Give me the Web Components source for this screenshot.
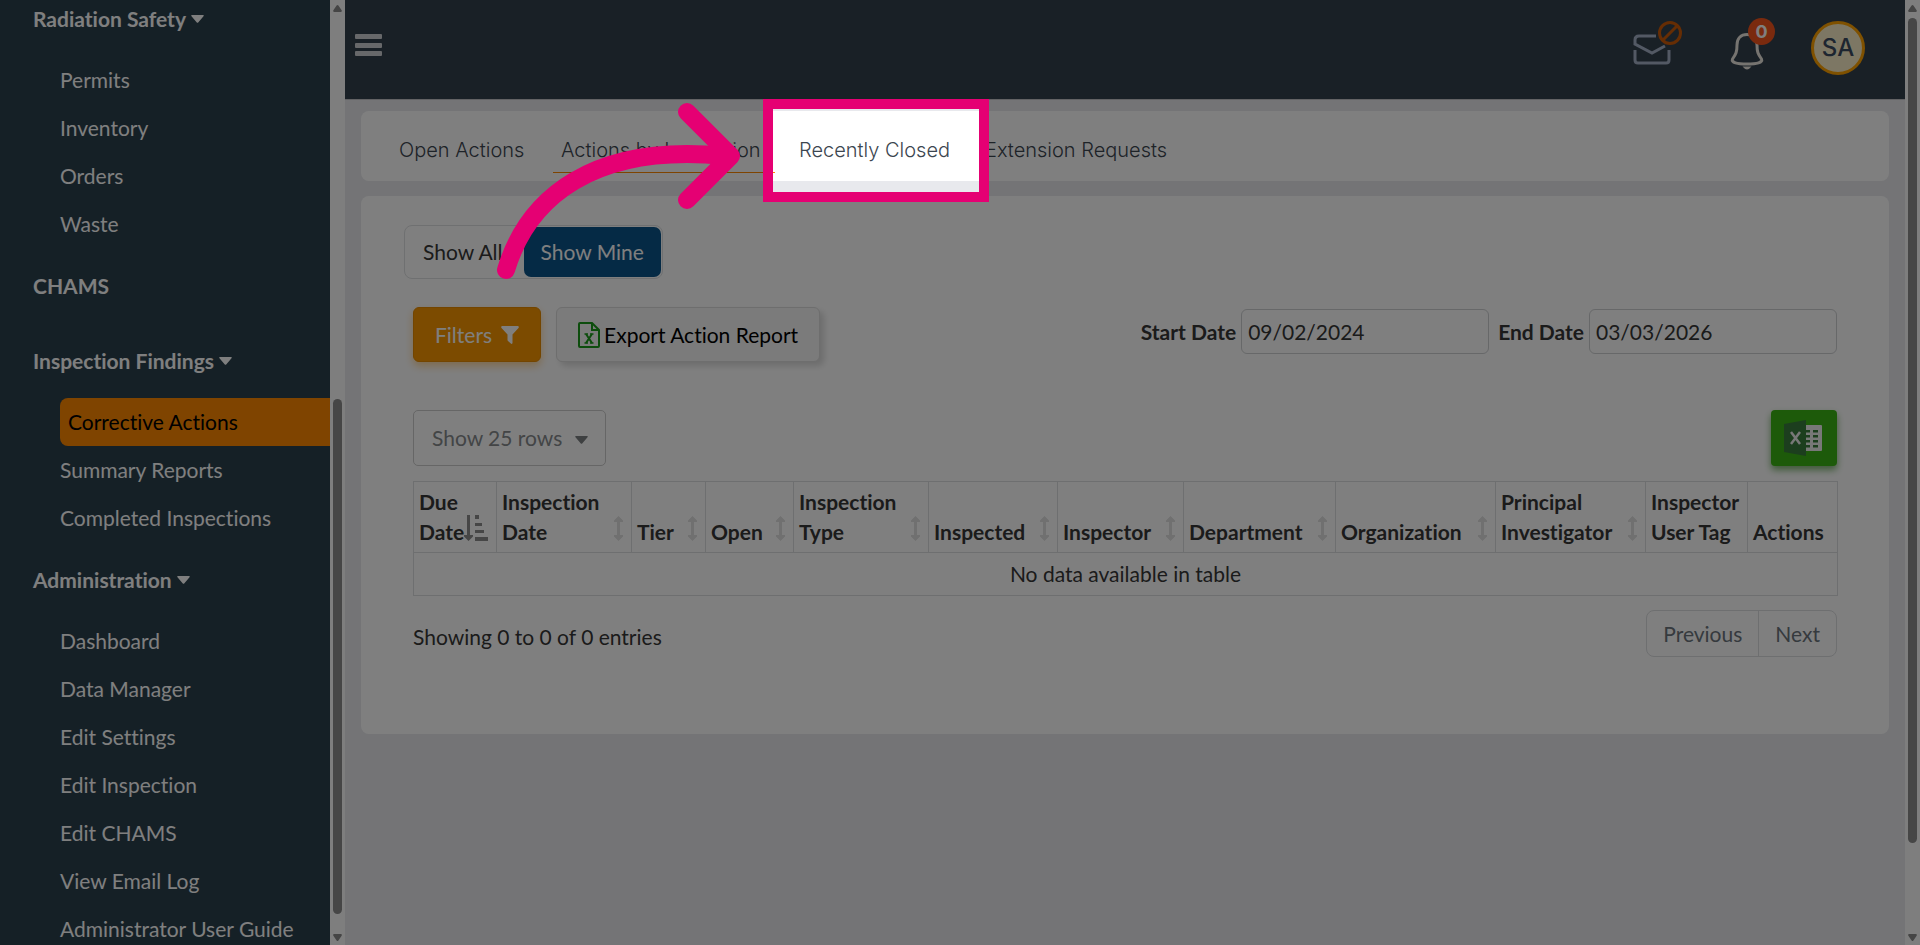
<!DOCTYPE html>
<html lang="en">
<head>
<meta charset="utf-8">
<title>Corrective Actions</title>
<style>
  body {
    margin: 0;
    height: 100vh;
    overflow: hidden;
    font-family: Lato, "Open Sans", sans-serif;
    font-size: 21px;
    line-height: 30px;
    font-variant-ligatures: none;
    color: #363636;
  }
</style>
</head>
<body>
<app-shell>
  <side-nav slot="nav">
    <nav-group label="Radiation Safety" open>
      <nav-item>Permits</nav-item>
      <nav-item>Inventory</nav-item>
      <nav-item>Orders</nav-item>
      <nav-item>Waste</nav-item>
    </nav-group>
    <nav-group label="CHAMS"></nav-group>
    <nav-group label="Inspection Findings" open>
      <nav-item active>Corrective Actions</nav-item>
      <nav-item>Summary Reports</nav-item>
      <nav-item>Completed Inspections</nav-item>
    </nav-group>
    <nav-group label="Administration" open>
      <nav-item>Dashboard</nav-item>
      <nav-item>Data Manager</nav-item>
      <nav-item>Edit Settings</nav-item>
      <nav-item>Edit Inspection</nav-item>
      <nav-item>Edit CHAMS</nav-item>
      <nav-item>View Email Log</nav-item>
      <nav-item>Administrator User Guide</nav-item>
    </nav-group>
  </side-nav>
  <top-bar slot="header" initials="SA" count="0"></top-bar>
  <tab-bar>
    <tab-link>Open Actions</tab-link>
    <tab-link active>Actions by Inspection</tab-link>
    <tab-link>Recently Closed<tour-spotlight slot="over"></tour-spotlight></tab-link>
    <tab-link>Extension Requests</tab-link>
  </tab-bar>
  <actions-panel></actions-panel>
</app-shell>

<script>
// every element gets an open shadow root filled from its template
function makeTemplate(html) {
  const template = document.createElement("template");
  template.innerHTML = html;
  return template;
}

class BaseElement extends HTMLElement {
  constructor() {
    super();
    this.attachShadow({ mode: "open" });
    this.shadowRoot.appendChild(this.constructor.template.content.cloneNode(true));
  }
}

// ---------- layout ----------
class AppShell extends BaseElement {
  static template = makeTemplate(`
    <style>
      :host { display: flex; height: 100vh; background: #e8e9ed; }
      .content { flex: 1; min-width: 0; display: flex; flex-direction: column; }
      main { padding: 11px 16px; display: flex; flex-direction: column; gap: 15px; }
    </style>
    <slot name="nav"></slot>
    <div class="content">
      <slot name="header"></slot>
      <main><slot></slot></main>
    </div>
    <scroll-rail style="--before: 0fr; --thumb: 825fr; --after: 84fr"></scroll-rail>
  `);
}
customElements.define("app-shell", AppShell);

class ScrollRail extends BaseElement {
  static template = makeTemplate(`
    <style>
      :host {
        box-sizing: border-box;
        flex: none;
        width: 15px;
        height: 100%;
        display: grid;
        grid-template-rows: 18px var(--before) var(--thumb) var(--after) 18px;
        justify-items: center;
        background: #fcfcfc;
      }
      svg { width: 9px; height: 7px; fill: #8a8a8a; margin-top: 5px; }
      .thumb { grid-row: 3; width: 9px; border-radius: 5px; background: #8c8c8c; }
      .down { grid-row: 5; margin-top: 7px; }
    </style>
    <svg viewBox="0 0 9 7"><path d="M4.5 0 Q5 0 5.4 .6 L8.8 5.6 Q9 7 8 7 H1 Q0 7 .2 5.6 L3.6 .6 Q4 0 4.5 0Z"/></svg>
    <div class="thumb"></div>
    <svg class="down" viewBox="0 0 9 7"><path d="M4.5 7 Q5 7 5.4 6.4 L8.8 1.4 Q9 0 8 0 H1 Q0 0 .2 1.4 L3.6 6.4 Q4 7 4.5 7Z"/></svg>
  `);
}
customElements.define("scroll-rail", ScrollRail);

// ---------- sidebar ----------
class SideNav extends BaseElement {
  static template = makeTemplate(`
    <style>
      :host { display: flex; flex: none; width: 345px; height: 100vh; overflow: hidden; background: #2a404c; }
      nav { flex: 1; margin-top: -19px; }
    </style>
    <nav><slot></slot></nav>
    <scroll-rail style="--before: 381fr; --thumb: 515fr; --after: 13fr"></scroll-rail>
  `);
}
customElements.define("side-nav", SideNav);

class NavGroup extends BaseElement {
  static template = makeTemplate(`
    <style>
      :host { display: block; }
      button {
        display: flex;
        align-items: center;
        gap: 5px;
        width: 100%;
        height: 75px;
        padding: 0 0 0 33px;
        border: 0;
        background: none;
        font: inherit;
        font-weight: 700;
        color: #fff;
      }
      svg { width: 13px; height: 8px; fill: #fff; display: none; }
      :host([open]) svg { display: block; }
      .items { padding-left: 60px; }
    </style>
    <button type="button"><span></span><svg viewBox="0 0 13 8"><path d="M1 0H12Q13.4 .3 12.5 1.3L7.2 7.4Q6.5 8 5.8 7.4L.5 1.3Q-.4 .3 1 0Z"/></svg></button>
    <div class="items"><slot></slot></div>
  `);
  connectedCallback() {
    this.shadowRoot.querySelector("span").textContent = this.getAttribute("label");
  }
}
customElements.define("nav-group", NavGroup);

class NavItem extends BaseElement {
  static template = makeTemplate(`
    <style>
      :host { display: block; }
      a { display: block; line-height: 48px; color: #fff; text-decoration: none; white-space: nowrap; }
      :host([active]) a { padding-left: 8px; border-radius: 8px 0 0 8px; background: #ff8800; color: #000; }
    </style>
    <a href="#"><slot></slot></a>
  `);
}
customElements.define("nav-item", NavItem);

// ---------- header ----------
class TopBar extends BaseElement {
  static template = makeTemplate(`
    <style>
      :host {
        box-sizing: border-box;
        display: flex;
        align-items: center;
        justify-content: space-between;
        height: 100px;
        padding: 0 40px 3px 10px;
        background: #33404d;
        border-bottom: 1px solid #c4c5c9;
      }
      button { padding: 0; border: 0; background: none; display: block; }
      svg { display: block; }
      .menu { margin-bottom: 6px; }
      .tools { display: flex; align-items: center; }
      .mail { margin-right: 47px; }
      .bell { position: relative; margin-right: 47px; }
      .badge {
        position: absolute;
        right: -11px;
        top: -3px;
        width: 27px;
        height: 27px;
        border-radius: 50%;
        background: #f4541c;
        color: #fff;
        font: 700 18px/27px Inter, sans-serif;
        text-align: center;
      }
      .avatar {
        box-sizing: border-box;
        width: 54px;
        height: 54px;
        border: 3px solid #ffa200;
        border-radius: 50%;
        background: #faeec8;
        color: #3a4a60;
        font: 500 24px/48px Inter, sans-serif;
      }
    </style>
    <button class="menu" type="button" aria-label="Menu">
      <svg width="27" height="22" viewBox="0 0 27 22" fill="#ced0d5">
        <rect width="27" height="5" rx="1"/><rect y="9" width="27" height="5" rx="1"/><rect y="17" width="27" height="5" rx="1"/>
      </svg>
    </button>
    <div class="tools">
      <button class="mail" type="button" aria-label="Mail">
        <svg width="50" height="54" viewBox="0 0 50 54" fill="none">
          <g stroke="#a6b2c8" stroke-width="3">
            <path d="M23 15H6Q2 15 2 19V23L19 32L32 25"/>
            <path d="M2 29V39Q2 42 5 42H33Q36 42 36 39V29"/>
          </g>
          <g stroke="#cc5a08" stroke-width="3"><circle cx="37" cy="12" r="10.5"/><path d="M30 19L44 5"/></g>
        </svg>
      </button>
      <button class="bell" type="button" aria-label="Notifications">
        <svg width="34" height="54" viewBox="0 0 34 54" fill="none">
          <path d="M17 13.5C11 13.5 7 17.5 7 24C7 31 6 33 2.5 38C1 41.500 7 43 17 43C27 43 33 41.500 31.5 38C28 33 27 31 27 24C27 17.500 23 13.500 17 13.5Z" stroke="#ece8e0" stroke-width="3"/>
          <path d="M12.5 45.5H21.5Q19 48.500 17 48.5Q15 48.500 12.5 45.5Z" fill="#ece8e0"/>
        </svg>
        <span class="badge"></span>
      </button>
      <button class="avatar" type="button"></button>
    </div>
  `);
  connectedCallback() {
    this.shadowRoot.querySelector(".badge").textContent = this.getAttribute("count");
    this.shadowRoot.querySelector(".avatar").textContent = this.getAttribute("initials");
  }
}
customElements.define("top-bar", TopBar);

// ---------- tabs ----------
class TabBar extends BaseElement {
  static template = makeTemplate(`
    <style>
      :host { display: block; border-radius: 8px; background: #fff; }
      nav {
        display: grid;
        grid-template-columns: 146px 222px 170px max-content;
        gap: 16px;
        padding: 17px 30px 8px;
      }
    </style>
    <nav><slot></slot></nav>
  `);
}
customElements.define("tab-bar", TabBar);

class TabLink extends BaseElement {
  static template = makeTemplate(`
    <style>
      :host { display: block; position: relative; font: 300 20px/44px Inter, sans-serif; }
      a {
        display: block;
        padding: 0 8px;
        border-bottom: 1px solid transparent;
        color: #3c4650;
        text-decoration: none;
        white-space: nowrap;
      }
      :host([active]) a { border-color: #ff8800; }
    </style>
    <a href="#"><slot></slot></a>
    <slot name="over"></slot>
  `);
}
customElements.define("tab-link", TabLink);

// dims everything but the box it sits on, with an arrow leading to it
class TourSpotlight extends BaseElement {
  static template = makeTemplate(`
    <style>
      :host {
        position: absolute;
        inset: -29px -28px;
        z-index: 10;
        border: 10px solid #e50073;
        box-shadow: 0 0 0 9999px rgba(0, 0, 0, .5);
        pointer-events: none;
      }
      svg { position: absolute; left: -283px; top: -14px; }
    </style>
    <svg width="260" height="195" viewBox="0 0 260 195" fill="none" stroke="#e50073" stroke-width="18" stroke-linecap="round" stroke-linejoin="round">
      <path d="M16 175C38 102 104 48 235 61"/>
      <path d="M197 17L241 61L197 105"/>
    </svg>
  `);
}
customElements.define("tour-spotlight", TourSpotlight);

// ---------- panel ----------
class DateField extends BaseElement {
  static template = makeTemplate(`
    <style>
      :host { display: flex; align-items: center; gap: 5px; }
      label { font-weight: 700; }
      input {
        box-sizing: border-box;
        width: 248px;
        height: 45px;
        padding: 0 6px;
        border: 1px solid #ced0d2;
        border-radius: 6px;
        background: #fff;
        font: inherit;
        color: inherit;
      }
    </style>
    <label for="date"></label>
    <input id="date" type="text">
  `);
  connectedCallback() {
    this.shadowRoot.querySelector("label").textContent = this.getAttribute("label");
    this.shadowRoot.querySelector("input").value = this.getAttribute("value");
  }
}
customElements.define("date-field", DateField);

const columns = [
  ["Due Date", 83, "active"],
  ["Inspection Date", 135, "sort"],
  ["Tier", 74, "sort"],
  ["Open", 88, "sort"],
  ["Inspection Type", 135, "sort"],
  ["Inspected", 129, "sort"],
  ["Inspector", 126, "sort"],
  ["Department", 152, "sort"],
  ["Organization", 160, "sort"],
  ["Principal Investigator", 150, "sort"],
  ["Inspector User Tag", 102, ""],
  ["Actions", 90, ""]
];

const sortIcons = {
  "": "",
  sort: `<svg width="9" height="25" viewBox="0 0 9 25" fill="#e0e0e0"><path d="M4.5 0L9 4.5V6H6V19H9V20.5L4.5 25L0 20.5V19H3V6H0V4.5Z"/></svg>`,
  active: `<svg class="on" width="24" height="26" viewBox="0 0 24 26" fill="#8c8c8c"><path d="M3 0H6V20H9V21.5L4.5 26L0 21.5V20H3Z"/><path d="M11 0H15V4H11ZM11 8H18V11H11ZM11 15H20V18H11ZM11 22H24V26H11Z"/></svg>`
};

class ActionsTable extends BaseElement {
  static template = makeTemplate(`
    <style>
      :host { display: block; }
      table { width: 100%; table-layout: fixed; border-collapse: collapse; }
      th, td { border: 1px solid #dcdee0; }
      th { position: relative; padding: 5px; text-align: left; vertical-align: bottom; font-weight: 700; }
      th span { display: block; width: min-content; }
      th svg { position: absolute; right: 8px; bottom: 11px; }
      td { padding: 6px; text-align: center; }
    </style>
    <table>
      <colgroup>${columns.map(c => `<col style="width: ${c[1]}px">`).join("")}</colgroup>
      <thead><tr>${columns.map(c => `<th>${c[0] === "Inspector User Tag" ? "Inspector User&nbsp;Tag" : `<span>${c[0]}</span>`}${sortIcons[c[2]]}</th>`).join("")}</tr></thead>
      <tbody><tr><td colspan="12">No data available in table</td></tr></tbody>
    </table>
  `);
}
customElements.define("actions-table", ActionsTable);

class ActionsPanel extends BaseElement {
  static template = makeTemplate(`
    <style>
      :host { display: block; padding: 29px 52px 77px; border-radius: 8px; background: #fff; }
      button, select { font: inherit; }
      .row { display: flex; align-items: center; justify-content: space-between; }
      .toggle {
        display: inline-flex;
        gap: 4px;
        margin-left: -9px;
        padding: 1px;
        border: 1px solid #dee0e2;
        border-radius: 8px;
      }
      .toggle button { height: 50px; padding: 0 17px; border: 0; border-radius: 7px; background: none; color: #363636; }
      .toggle .on { background: #0b548a; color: #fff; }
      .controls { margin-top: 28px; }
      .buttons { display: flex; gap: 15px; }
      .buttons button { display: flex; align-items: center; height: 55px; border-radius: 6px; }
      .filters {
        gap: 9px;
        padding: 0 21px;
        border: 1px solid #e68a00;
        background: #f89600;
        color: #fff;
        box-shadow: 0 4px 8px rgba(248, 150, 0, .4);
      }
      .export {
        gap: 4px;
        padding: 0 21px;
        border: 1px solid #dcdcdc;
        background: #f6f6f6;
        color: #000;
        box-shadow: 4px 4px 6px rgba(0, 0, 0, .15);
      }
      .dates { display: flex; gap: 9px; margin-bottom: 6px; }
      .tools { margin: 48px 0 15px; }
      .length { position: relative; }
      .length svg { position: absolute; right: 18px; top: 26px; }
      select {
        appearance: none;
        box-sizing: border-box;
        width: 193px;
        height: 56px;
        padding: 0 18px;
        border: 1px solid #ccc;
        border-radius: 5px;
        background: #fff;
        color: #868a8d;
      }
      .excel {
        width: 66px;
        height: 56px;
        padding: 0 0 0 13px;
        border: 0;
        border-radius: 4px;
        background: #3ab414;
        box-shadow: 0 4px 7px rgba(40, 130, 20, .6);
      }
      svg { display: block; }
      .footer { margin-top: 14px; }
      .pager { display: flex; border: 1px solid #dcdee0; border-radius: 8px; }
      .pager button { height: 45px; padding: 0 16px; border: 0; background: none; color: #6c757d; }
      .pager button + button { border-left: 1px solid #dcdee0; }
      .info { margin-top: 7px; }
    </style>
    <div class="toggle">
      <button type="button">Show All</button>
      <button class="on" type="button">Show Mine</button>
    </div>
    <div class="row controls">
      <div class="buttons">
        <button class="filters" type="button">Filters
          <svg width="18" height="18" viewBox="0 0 18 18" fill="#fff"><path d="M1 0H17Q18.4 .6 17.5 2L11.5 8.5V17Q11 18.5 9.8 17.6L7 15Q6.5 14.6 6.5 14V8.5L.5 2Q-.4 .6 1 0Z"/></svg>
        </button>
        <button class="export" type="button">
          <svg width="22" height="26" viewBox="0 0 22 26" fill="none" stroke="#1a9a1a" stroke-width="2">
            <path d="M2 1H14L21 8V24Q21 25 20 25H2Q1 25 1 24V2Q1 1 2 1ZM14 1V8H21"/>
            <path d="M8 12L14 21M14 12L8 21"/>
            <path d="M6.5 12H10M12 12H15.5M6.5 21H10M12 21H15.5" stroke-width="1.5"/>
          </svg>
          Export Action Report
        </button>
      </div>
      <div class="dates">
        <date-field label="Start Date" value="09/02/2024"></date-field>
        <date-field label="End Date" value="03/03/2026"></date-field>
      </div>
    </div>
    <div class="row tools">
      <div class="length">
        <select aria-label="Rows per page"><option>Show 25 rows</option></select>
        <svg width="13" height="8" viewBox="0 0 13 8" fill="#7c8082"><path d="M1 0H12Q13.4 .3 12.5 1.3L7.2 7.4Q6.5 8 5.8 7.4L.5 1.3Q-.4 .3 1 0Z"/></svg>
      </div>
      <button class="excel" type="button" aria-label="Export to Excel">
        <svg width="38" height="36" viewBox="0 0 38 36">
          <path d="M21 5H37Q38 5 38 6V30Q38 31 37 31H21Z" fill="#f0f0f0"/>
          <path d="M22 10H26V12.5H22ZM29 10H34V12.5H29ZM22 15H26V17.5H22ZM29 15H34V17.5H29ZM22 20H26V22.5H22ZM29 20H34V22.5H29ZM22 25H26V27.5H22ZM29 25H34V27.5H29Z" fill="#387c3c"/>
          <path d="M0 4L22 0V36L0 32Z" fill="#387c3c"/>
          <path d="M7 12L16 24M16 12L7 24" stroke="#f0f0f0" stroke-width="2.5"/>
        </svg>
      </button>
    </div>
    <actions-table></actions-table>
    <div class="row footer">
      <div class="info">Showing 0 to 0 of 0 entries</div>
      <div class="pager">
        <button type="button" disabled>Previous</button>
        <button type="button" disabled>Next</button>
      </div>
    </div>
  `);
}
customElements.define("actions-panel", ActionsPanel);
</script>
</body>
</html>
